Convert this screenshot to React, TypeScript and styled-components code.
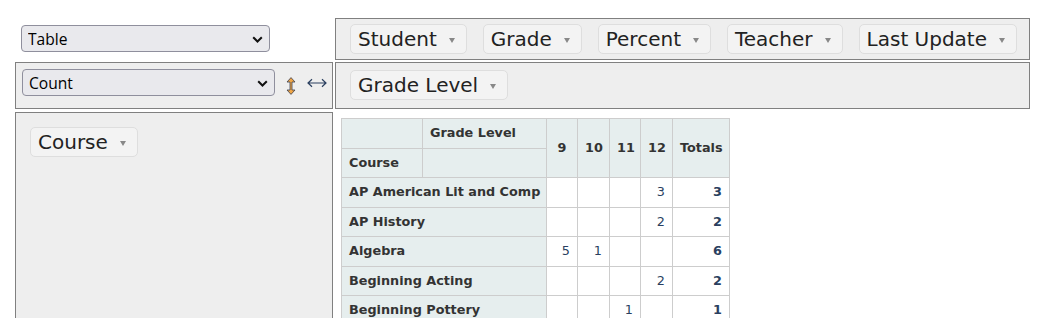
import React from "react";
import styled, { createGlobalStyle } from "styled-components";

const GlobalStyle = createGlobalStyle`
  html, body {
    margin: 0;
    padding: 0;
    background: #fff;
    overflow: hidden;
  }
  body {
    font-family: "DejaVu Sans", Verdana, sans-serif;
    color: #333;
  }
`;

const PivotUi = styled.div`
  display: grid;
  grid-template-columns: 318px 695px;
  grid-template-rows: 42px 47px auto;
  column-gap: 2px;
  row-gap: 2px;
  padding: 18px 0 0 15px;
`;

const RendererCell = styled.div`
  padding: 7px 6px;
`;

const AxisBox = styled.div<{ $padTop: number; $shift?: number }>`
  box-sizing: border-box;
  border: 1px solid #808080;
  background: #eee;
  margin-top: ${(p) => p.$shift ?? 0}px;
  padding: ${(p) => p.$padTop}px 4px 0 14px;
  display: flex;
  flex-wrap: wrap;
  align-items: flex-start;
  align-content: flex-start;
  gap: 16px;
`;

const ValsBox = styled.div`
  box-sizing: border-box;
  border: 1px solid #808080;
  background: #eee;
  padding: 6px;
  display: flex;
  align-items: flex-start;
`;

const OutputCell = styled.div<{ $shift?: number }>`
  margin-top: ${(p) => p.$shift ?? 0}px;
  padding: 6px 0 0 6px;
`;

const SelectWrap = styled.div<{ $width: number }>`
  position: relative;
  width: ${(p) => p.$width}px;
  height: 27px;
  flex-shrink: 0;
`;

const NativeSelect = styled.select`
  appearance: none;
  box-sizing: border-box;
  width: 100%;
  height: 100%;
  margin: 0;
  border: 1px solid #8f8f9d;
  border-radius: 4px;
  background: #e9e9ed;
  color: #000;
  font-family: "Open Sans", "Noto Sans", sans-serif;
  font-size: 15.6px;
  padding: 0 24px 0 6px;
  outline: none;
`;

const Chevron = styled.svg`
  position: absolute;
  right: 7px;
  top: 50%;
  margin-top: -3px;
  width: 11px;
  height: 7px;
  pointer-events: none;
`;

const OrderIcon = styled.svg<{ $left: number; $top: number }>`
  margin-left: ${(p) => p.$left}px;
  margin-top: ${(p) => p.$top}px;
  flex-shrink: 0;
  cursor: pointer;
`;

const Attr = styled.span`
  box-sizing: border-box;
  display: inline-flex;
  align-items: center;
  height: 30px;
  padding: 0 11px 0 7px;
  background: #f3f3f3;
  border: 1px solid #dedede;
  border-radius: 5px;
  font-size: 20px;
  color: #222;
  white-space: nowrap;
`;

const Triangle = styled.span`
  display: inline-block;
  width: 0;
  height: 0;
  margin: 2px 0 0 12px;
  border-left: 3px solid transparent;
  border-right: 3px solid transparent;
  border-top: 5px solid #888;
`;

const PivotTable = styled.table`
  border-collapse: collapse;
  table-layout: fixed;
  width: 389px;
  font-family: "DejaVu Sans", Verdana, sans-serif;
  font-size: 12.8px;
  line-height: 16.5px;
`;

const HeadCell = styled.th<{ $align?: string }>`
  background: #e6eeee;
  border: 1px solid #cdcdcd;
  color: #333;
  font-weight: bold;
  padding: 6px 7px;
  text-align: ${(p) => p.$align ?? "left"};
  white-space: nowrap;
  overflow: hidden;
`;

const ValueCell = styled.td<{ $total?: boolean }>`
  background: #fff;
  border: 1px solid #cdcdcd;
  color: #2a3f5f;
  padding: 6px 7px;
  text-align: right;
  vertical-align: top;
  font-weight: ${(p) => (p.$total ? "bold" : "normal")};
`;

const Select = ({ width, value, options }: { width: number; value: string; options: string[] }) => (
  <SelectWrap $width={width}>
    <NativeSelect defaultValue={value}>
      {options.map((o) => (
        <option key={o}>{o}</option>
      ))}
    </NativeSelect>
    <Chevron viewBox="0 0 11 7">
      <path d="M1.2 1.2 L5.5 5.5 L9.8 1.2" fill="none" stroke="#111" strokeWidth="2" />
    </Chevron>
  </SelectWrap>
);

const Chip = ({ name }: { name: string }) => (
  <Attr>
    {name}
    <Triangle />
  </Attr>
);

const unused = ["Student", "Grade", "Percent", "Teacher", "Last Update"];
const cols = ["9", "10", "11", "12"];
const rows: { course: string; cells: Record<string, number>; total: number }[] = [
  { course: "AP American Lit and Comp", cells: { "12": 3 }, total: 3 },
  { course: "AP History", cells: { "12": 2 }, total: 2 },
  { course: "Algebra", cells: { "9": 5, "10": 1 }, total: 6 },
  { course: "Beginning Acting", cells: { "12": 2 }, total: 2 },
  { course: "Beginning Pottery", cells: { "11": 1 }, total: 1 },
];

export default function App() {
  return (
    <>
      <GlobalStyle />
      <PivotUi>
        <RendererCell>
          <Select width={249} value="Table" options={["Table", "Table Heatmap", "Table Col Heatmap", "Table Row Heatmap", "Exportable TSV"]} />
        </RendererCell>
        <AxisBox $padTop={5}>
          {unused.map((u) => (
            <Chip key={u} name={u} />
          ))}
        </AxisBox>

        <ValsBox>
          <Select width={253} value="Count" options={["Count", "Count Unique Values", "List Unique Values", "Sum", "Average"]} />
          <OrderIcon $left={11} $top={8} width="10" height="18" viewBox="0 0 10 18">
            <path
              d="M5 0.6 L9 5 L6 5 L6 13 L9 13 L5 17.4 L1 13 L4 13 L4 5 L1 5 Z"
              fill="#f0a646"
              stroke="#3b3f4e"
              strokeWidth="0.8"
              strokeLinejoin="round"
            />
          </OrderIcon>
          <OrderIcon $left={11} $top={9} width="20" height="10" viewBox="0 0 20 10">
            <path d="M1 5 H19 M5 1.2 L1 5 L5 8.8 M15 1.2 L19 5 L15 8.8" fill="none" stroke="#2a3f5f" strokeWidth="1.2" />
          </OrderIcon>
        </ValsBox>
        <AxisBox $padTop={7}>
          <Chip name="Grade Level" />
        </AxisBox>

        <AxisBox $padTop={14} $shift={1}>
          <Chip name="Course" />
        </AxisBox>
        <OutputCell $shift={1}>
          <PivotTable>
            <colgroup>
              <col style={{ width: 81 }} />
              <col style={{ width: 124 }} />
              <col style={{ width: 31 }} />
              <col style={{ width: 32 }} />
              <col style={{ width: 31 }} />
              <col style={{ width: 32 }} />
              <col style={{ width: 57 }} />
            </colgroup>
            <thead>
              <tr>
                <HeadCell />
                <HeadCell>Grade Level</HeadCell>
                {cols.map((c) => (
                  <HeadCell key={c} rowSpan={2} $align="center">
                    {c}
                  </HeadCell>
                ))}
                <HeadCell rowSpan={2} $align="right">
                  Totals
                </HeadCell>
              </tr>
              <tr>
                <HeadCell>Course</HeadCell>
                <HeadCell />
              </tr>
            </thead>
            <tbody>
              {rows.map((r) => (
                <tr key={r.course}>
                  <HeadCell colSpan={2}>{r.course}</HeadCell>
                  {cols.map((c) => (
                    <ValueCell key={c}>{r.cells[c] ?? ""}</ValueCell>
                  ))}
                  <ValueCell $total>{r.total}</ValueCell>
                </tr>
              ))}
            </tbody>
          </PivotTable>
        </OutputCell>
      </PivotUi>
    </>
  );
}
